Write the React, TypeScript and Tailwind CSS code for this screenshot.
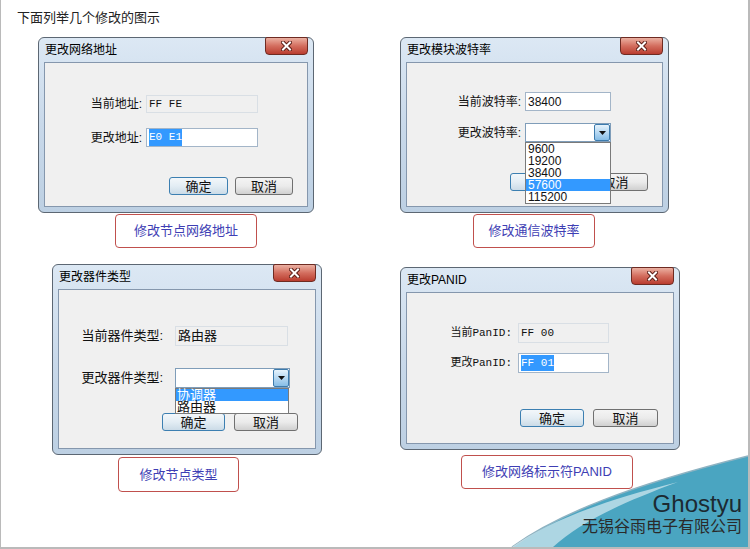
import React from "react"

const mono = "font-['Liberation_Mono','Noto_Sans_CJK_SC',monospace]"

function CloseButton() {
    return (
        <div className="-mt-px flex h-[18px] w-[43px] items-center justify-center rounded-b-[4px] rounded-t-[2px] border border-[#6e2b22] bg-gradient-to-b from-[#eab0a2] via-[#d36d5e] to-[#b93c2f]">
            <svg width="11" height="10" viewBox="0 0 11 10">
                <path d="M2 1.5 L9 8.5 M9 1.5 L2 8.5" stroke="#5b1d16" strokeWidth="4" strokeLinecap="square" />
                <path d="M2 1.5 L9 8.5 M9 1.5 L2 8.5" stroke="#ffffff" strokeWidth="2" strokeLinecap="square" />
            </svg>
        </div>
    )
}

function Dialog({ title, className, children }: { title: string; className: string; children: React.ReactNode }) {
    return (
        <div className={`flex flex-col rounded-[6px] border border-[#5c6773] bg-gradient-to-b from-[#dce8f4] via-[#c9d9ea] to-[#bdd0e3] px-[5px] pb-[5px] ${className}`}>
            <div className="flex h-[24px] items-start justify-between">
                <span className="pl-px pt-[5px] text-[12px] leading-[14px] text-black">{title}</span>
                <CloseButton />
            </div>
            <div className="relative flex-1 border border-[#8597ad] bg-[#f0f0f0]">{children}</div>
        </div>
    )
}

function Field({ className, gray, children }: { className: string; gray?: boolean; children?: React.ReactNode }) {
    return (
        <div className={`flex items-center border px-[2px] ${gray ? "border-[#d9dfe5] bg-[#f0f0f0]" : "border-[#a3b5c8] bg-white"} ${className}`}>
            {children}
        </div>
    )
}

function Combo({ className }: { className: string }) {
    return (
        <div className={`flex items-stretch justify-end border border-[#7f9db9] bg-white ${className}`}>
            <div className="flex w-[16px] items-center justify-center rounded-[2px] border border-[#3d7bad] bg-gradient-to-b from-[#e6f3fc] to-[#86bde6]">
                <svg width="7" height="4" viewBox="0 0 7 4">
                    <path d="M0 0 L7 0 L3.5 4 Z" fill="#111" />
                </svg>
            </div>
        </div>
    )
}

function Buttons({ className, okW, cancelW }: { className: string; okW: string; cancelW: string }) {
    return (
        <div className={`flex justify-end ${className}`}>
            <div className={`flex h-[18px] items-center justify-center rounded-[3px] border border-[#3c7fb1] bg-gradient-to-b from-[#f3f7fa] via-[#e3edf4] to-[#cbdbe7] text-[13px] leading-none ${okW}`}>确定</div>
            <div className={`flex h-[18px] items-center justify-center rounded-[3px] border border-[#707070] bg-gradient-to-b from-[#f4f4f4] via-[#ebebeb] to-[#d0d0d0] text-[13px] leading-none ${cancelW}`}>取消</div>
        </div>
    )
}

function Caption({ text, className }: { text: string; className: string }) {
    return (
        <div className={`flex items-center justify-center rounded-[4px] border border-[#c0504d] bg-white text-[13px] text-[#3e3eb4] ${className}`}>
            {text}
        </div>
    )
}

export default function App() {
    return (
        <div className="relative h-[549px] w-[750px] overflow-hidden border-b-2 border-l border-r-2 border-[#bababa] bg-white font-['Liberation_Sans','Noto_Sans_CJK_SC',sans-serif] text-[#111]">
            <div className="pl-[16px] pt-[10px] text-[13px] leading-[16px] text-[#222]">下面列举几个修改的图示</div>

            {/* row 1 */}
            <div className="flex items-start pt-[11px]">
                <div className="ml-[37px] flex flex-col">
                    <Dialog title="更改网络地址" className="h-[176px] w-[276px]">
                        <div className="flex flex-col pt-[32px] text-[12px]">
                            <div className="flex items-center">
                                <span className="w-[101px] pr-[4px] text-right">当前地址:</span>
                                <Field gray className={`h-[18px] w-[112px] text-[11px] ${mono}`}>FF FE</Field>
                            </div>
                            <div className="mt-[15px] flex items-center">
                                <span className="w-[101px] pr-[4px] text-right">更改地址:</span>
                                <Field className={`h-[19px] w-[112px] text-[11px] ${mono}`}>
                                    <span className="bg-[#3399ff] text-white">E0 E1</span>
                                </Field>
                            </div>
                            <Buttons className="mt-[30px] gap-[7px] pr-[14px]" okW="w-[59px]" cancelW="w-[58px]" />
                        </div>
                    </Dialog>
                    <Caption text="修改节点网络地址" className="ml-[77px] mt-px h-[34px] w-[142px]" />
                </div>

                <div className="ml-[86px] flex flex-col">
                    <Dialog title="更改模块波特率" className="h-[176px] w-[269px]">
                        <div className="flex flex-col pt-[29px] text-[12px]">
                            <div className="flex items-center">
                                <span className="w-[118px] pr-[4px] text-right">当前波特率:</span>
                                <Field className="h-[19px] w-[86px]">38400</Field>
                            </div>
                            <div className="mt-[12px] flex items-center">
                                <span className="w-[118px] pr-[4px] text-right">更改波特率:</span>
                                <Combo className="h-[19px] w-[86px]" />
                            </div>
                            <Buttons className="mt-[31px] gap-[9px] pr-[14px]" okW="w-[64px]" cancelW="w-[65px]" />
                        </div>
                        <div className="absolute left-[118px] top-[79px] flex w-[86px] flex-col border border-[#7a7a7a] bg-white text-[12px] leading-[12px]">
                            <span className="px-[2px]">9600</span>
                            <span className="px-[2px]">19200</span>
                            <span className="px-[2px]">38400</span>
                            <span className="bg-[#3399ff] px-[2px] text-white">57600</span>
                            <span className="px-[2px]">115200</span>
                        </div>
                    </Dialog>
                    <Caption text="修改通信波特率" className="ml-[73px] mt-px h-[34px] w-[122px]" />
                </div>
            </div>

            {/* row 2 */}
            <div className="mt-[16px] flex items-start">
                <div className="ml-[51px] flex flex-col">
                    <Dialog title="更改器件类型" className="h-[191px] w-[270px]">
                        <div className="flex flex-col pt-[36px] text-[13px]">
                            <div className="flex items-center">
                                <span className="w-[116px] pr-[12px] text-right">当前器件类型:</span>
                                <Field gray className="h-[20px] w-[113px]">路由器</Field>
                            </div>
                            <div className="mt-[22px] flex items-center">
                                <span className="w-[116px] pr-[12px] text-right">更改器件类型:</span>
                                <Combo className="h-[20px] w-[115px]" />
                            </div>
                            <Buttons className="mt-[25px] gap-[9px] pr-[17px]" okW="w-[63px]" cancelW="w-[64px]" />
                        </div>
                        <div className="absolute left-[116px] top-[98px] flex w-[114px] flex-col border border-[#7a7a7a] bg-white text-[13px] leading-[12px]">
                            <span className="bg-[#3399ff] px-px text-white">协调器</span>
                            <span className="px-px">路由器</span>
                        </div>
                    </Dialog>
                    <Caption text="修改节点类型" className="ml-[66px] mt-[2px] h-[35px] w-[121px]" />
                </div>

                <div className="ml-[78px] mt-[3px] flex flex-col">
                    <Dialog title="更改PANID" className="h-[183px] w-[280px]">
                        <div className="flex flex-col pt-[30px] text-[12px]">
                            <div className="flex items-center">
                                <span className={`w-[111px] pr-[6px] text-right text-[11px] ${mono}`}>当前PanID:</span>
                                <Field gray className={`h-[20px] w-[91px] text-[11px] ${mono}`}>FF 00</Field>
                            </div>
                            <div className="mt-[10px] flex items-center">
                                <span className={`w-[111px] pr-[6px] text-right text-[11px] ${mono}`}>更改PanID:</span>
                                <Field className={`h-[20px] w-[91px] text-[11px] ${mono}`}>
                                    <span className="bg-[#3399ff] text-white">FF 01</span>
                                </Field>
                            </div>
                            <Buttons className="mt-[36px] gap-[9px] pr-[15px]" okW="w-[64px]" cancelW="w-[65px]" />
                        </div>
                    </Dialog>
                    <Caption text="修改网络标示符PANID" className="ml-[61px] mt-[5px] h-[34px] w-[172px]" />
                </div>
            </div>

            {/* logo watermark */}
            <svg className="absolute bottom-0 right-0" width="240" height="95" viewBox="0 0 240 95">
                <path d="M4 95 C 50 62, 120 34, 240 4 L 240 95 Z" fill="#4aa5c1" />
                <path d="M4 95 C 50 62, 120 34, 240 4" fill="none" stroke="#8fb3c2" strokeWidth="1.5" />
                <path d="M4 95 C 40 70, 90 50, 170 30 C 110 52, 70 72, 45 95 Z" fill="#ffffff" opacity="0.55" />
            </svg>
            <div className="absolute bottom-[10px] right-[6px] flex flex-col items-end">
                <span className="text-[24px] leading-[26px] text-[#1c2a32]">Ghostyu</span>
                <span className="text-[16px] leading-[20px] text-[#2a2a2a]">无锡谷雨电子有限公司</span>
            </div>
        </div>
    )
}
